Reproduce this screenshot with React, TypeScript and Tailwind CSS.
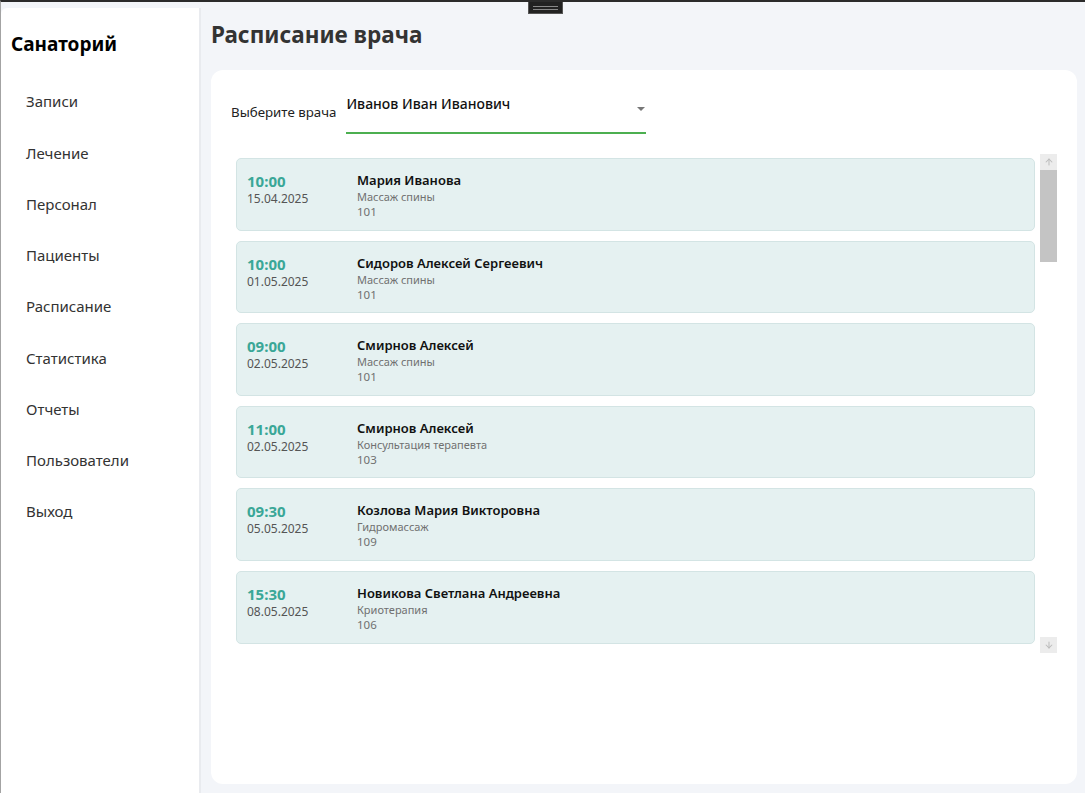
import { ArrowUp, ArrowDown } from 'lucide-react';

interface Visit {
  time: string;
  date: string;
  patient: string;
  service: string;
  room: string;
}

const visits: Visit[] = [
  { time: '10:00', date: '15.04.2025', patient: 'Мария Иванова', service: 'Массаж спины', room: '101' },
  { time: '10:00', date: '01.05.2025', patient: 'Сидоров Алексей Сергеевич', service: 'Массаж спины', room: '101' },
  { time: '09:00', date: '02.05.2025', patient: 'Смирнов Алексей', service: 'Массаж спины', room: '101' },
  { time: '11:00', date: '02.05.2025', patient: 'Смирнов Алексей', service: 'Консультация терапевта', room: '103' },
  { time: '09:30', date: '05.05.2025', patient: 'Козлова Мария Викторовна', service: 'Гидромассаж', room: '109' },
  { time: '15:30', date: '08.05.2025', patient: 'Новикова Светлана Андреевна', service: 'Криотерапия', room: '106' },
];

const menu = ['Записи', 'Лечение', 'Персонал', 'Пациенты', 'Расписание', 'Статистика', 'Отчеты', 'Пользователи', 'Выход'];

function VisitCard({ v }: { v: Visit }) {
  return (
    <div className="h-[72.6px] shrink-0 flex bg-[#e5f1f1] border border-[#d3e4e4] rounded-[5px] pl-[10px] pt-[13px]">
      <div className="w-[110px] flex flex-col">
        <span className="text-[15px] leading-[19px] font-bold text-[#3aa797]">{v.time}</span>
        <span className="text-[12px] leading-[16px] text-[#555]">{v.date}</span>
      </div>
      <div className="flex flex-col">
        <span className="text-[13px] leading-[17px] font-semibold text-[#111]">{v.patient}</span>
        <span className="text-[11px] leading-[15px] text-[#707070]">{v.service}</span>
        <span className="text-[11.5px] leading-[15px] text-[#707070]">{v.room}</span>
      </div>
    </div>
  );
}

export default function App() {
  return (
    <div className="relative w-full h-[793px] overflow-hidden bg-[#f3f5f9] border-t-2 border-[#2b2b2b] border-l border-l-[#a3a3a3] flex" style={{ fontFamily: '"Noto Sans", "Open Sans", sans-serif' }}>
      {/* window drag handle */}
      <div className="absolute left-[527px] top-0 w-[35px] h-[12px] bg-[#222] border border-[#555] border-t-0 flex flex-col items-center justify-center gap-[2px]">
        <div className="w-[25px] h-px bg-[#888]" />
        <div className="w-[25px] h-px bg-[#888]" />
      </div>

      <aside className="w-[200px] shrink-0 mt-[6px] bg-white rounded-tl-[6px] border-r-2 border-[#e9ebef] pt-[24px]">
        <h1 className="pl-[10px] text-[19px] leading-[24px] font-bold text-black">Санаторий</h1>
        <nav className="mt-[20px] flex flex-col">
          {menu.map((m) => (
            <div key={m} className="h-[51.25px] pl-[25px] flex items-center text-[15px] text-[#333]">
              {m}
            </div>
          ))}
        </nav>
      </aside>

      <main className="flex-1 flex flex-col pl-[10px] pr-[8px] pb-[9px]">
        <h2 className="mt-[17px] h-[31px] text-[22.5px] leading-[31px] font-bold text-[#333]">Расписание врача</h2>
        <section className="mt-[20px] flex-1 bg-white rounded-[12px] p-5 flex flex-col">
          <div className="flex items-end">
            <span className="text-[13.3px] text-[#222] mb-[11px] mr-[10px]">Выберите врача</span>
            <div className="w-[300px] h-[44px] relative border-b-2 border-[#4caf50] pt-[1px]">
              <span className="text-[14px] font-medium text-[#111]">Иванов Иван Иванович</span>
              <span className="absolute right-[1px] top-[17px] w-0 h-0 border-l-[4px] border-r-[4px] border-t-[4px] border-l-transparent border-r-transparent border-t-[#777]" />
            </div>
          </div>

          <div className="mt-5 ml-[5px] h-[500px] flex">
            <div className="flex-1 overflow-hidden pt-[4px] flex flex-col">
              <div className="flex flex-col gap-2.5">
                {visits.map((v, i) => (
                  <VisitCard key={i} v={v} />
                ))}
              </div>
              <div className="mt-[10px] h-px shrink-0 mr-[5px] bg-[#efece2]" />
            </div>
            <div className="w-[17px] ml-[5px] flex flex-col">
              <div className="h-[16px] bg-[#ececec] flex items-center justify-center">
                <ArrowUp size={10} strokeWidth={2.5} className="text-[#bdbdbd]" />
              </div>
              <div className="h-[92px] bg-[#c4c4c4]" />
              <div className="flex-1" />
              <div className="h-[16px] mb-px bg-[#ececec] flex items-center justify-center">
                <ArrowDown size={10} strokeWidth={2.5} className="text-[#bdbdbd]" />
              </div>
            </div>
          </div>
        </section>
      </main>
    </div>
  );
}
